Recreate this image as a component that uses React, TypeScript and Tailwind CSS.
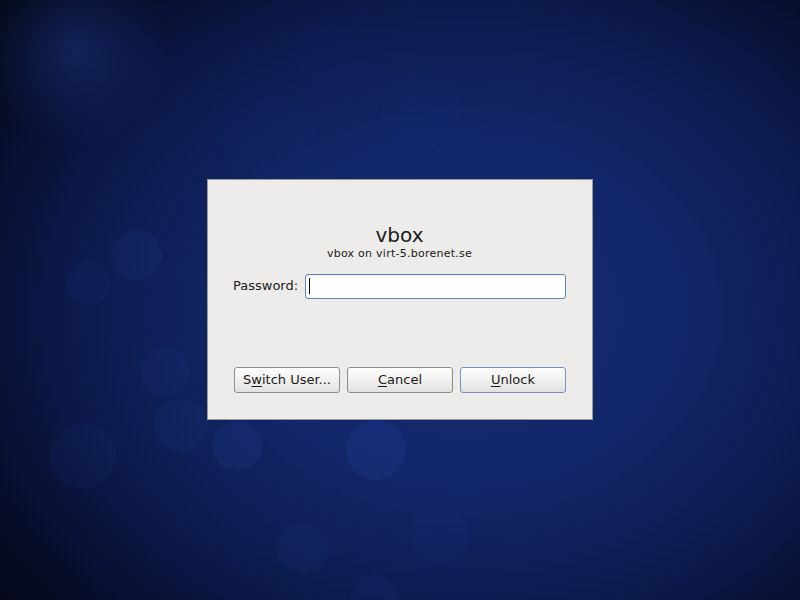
import React from "react";

const bokeh = [
  { cx: 137, cy: 255, r: 25, o: 0.08 },
  { cx: 88, cy: 283, r: 22, o: 0.05 },
  { cx: 165, cy: 372, r: 25, o: 0.05 },
  { cx: 181, cy: 425, r: 27, o: 0.06 },
  { cx: 83, cy: 456, r: 33, o: 0.06 },
  { cx: 237, cy: 446, r: 25, o: 0.1 },
  { cx: 376, cy: 450, r: 30, o: 0.11 },
  { cx: 302, cy: 548, r: 26, o: 0.06 },
  { cx: 440, cy: 535, r: 30, o: 0.03 },
  { cx: 375, cy: 600, r: 25, o: 0.05 },
  { cx: 330, cy: 55, r: 32, o: 0.025 },
  { cx: 420, cy: 110, r: 40, o: 0.02 },
  { cx: 270, cy: 145, r: 50, o: 0.02 },
];

function Mnemonic({ before, letter, after }: { before?: string; letter: string; after: string }) {
  return (
    <span>
      {before}
      <span className="underline decoration-1 underline-offset-2">{letter}</span>
      {after}
    </span>
  );
}

function DialogButton({ children, primary }: { children: React.ReactNode; primary?: boolean }) {
  return (
    <button
      className={`h-[26px] w-[106px] rounded-[3px] border bg-gradient-to-b from-white to-[#e2e1df] text-[13px] text-[#1a1a1a] shadow-[inset_0_1px_0_#ffffff] ${
        primary ? "border-[#6f93c6]" : "border-[#8d8c8a]"
      }`}
    >
      {children}
    </button>
  );
}

export default function App() {
  return (
    <div
      className="relative flex h-[600px] w-[800px] items-center justify-center overflow-hidden bg-[radial-gradient(ellipse_75%_80%_at_58%_52%,#162c72_0%,#12276a_35%,#0c1a4c_65%,#060c26_88%,#040817_100%)]"
      style={{ fontFamily: '"DejaVu Sans", "Liberation Sans", sans-serif' }}
    >
      <svg className="absolute inset-0" width="800" height="600">
        <defs>
          <radialGradient id="glow">
            <stop offset="0%" stopColor="#22409a" stopOpacity="0.4" />
            <stop offset="60%" stopColor="#22409a" stopOpacity="0.15" />
            <stop offset="100%" stopColor="#22409a" stopOpacity="0" />
          </radialGradient>
        </defs>
        <circle cx="75" cy="50" r="95" fill="url(#glow)" />
        {bokeh.map((b, i) => (
          <circle key={i} cx={b.cx} cy={b.cy} r={b.r} fill="#3b63d0" fillOpacity={b.o} />
        ))}
      </svg>

      <div className="relative mb-[2px] flex h-[241px] w-[386px] flex-col border border-[#9a9996] bg-[#edeceb] pl-[25px] pr-[26px] pt-[43px]">
        <div className="text-center text-[20px] leading-[24px] text-[#1a1a1a]">vbox</div>
        <div className="text-center text-[11px] leading-[14px] tracking-[0.25px] text-[#1a1a1a]">
          vbox on virt-5.borenet.se
        </div>

        <div className="mt-[13px] flex items-center gap-[7px]">
          <span className="text-[13px] text-[#1a1a1a]">Password:</span>
          <div className="flex h-[25px] flex-1 items-center rounded-[3px] border border-[#5a84c0] bg-white px-[3px] shadow-[inset_0_1px_1px_rgba(0,0,0,0.08)]">
            <div className="h-[16px] w-px bg-black" />
          </div>
        </div>

        <div className="ml-px mt-[68px] flex gap-[7px]">
          <DialogButton>
            <Mnemonic before="S" letter="w" after="itch User..." />
          </DialogButton>
          <DialogButton>
            <Mnemonic letter="C" after="ancel" />
          </DialogButton>
          <DialogButton primary>
            <Mnemonic letter="U" after="nlock" />
          </DialogButton>
        </div>
      </div>
    </div>
  );
}
